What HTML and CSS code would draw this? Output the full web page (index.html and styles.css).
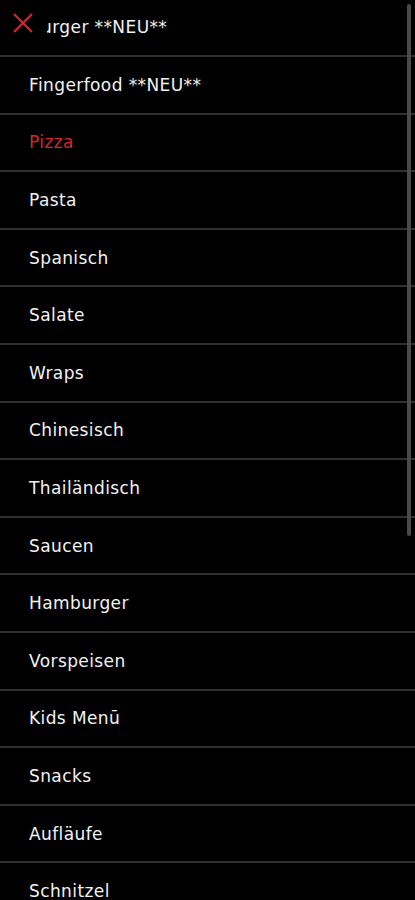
FILE: index.html
```html
<!DOCTYPE html>
<html lang="de">
<head>
    <meta charset="UTF-8">
    <meta name="viewport" content="width=device-width, initial-scale=1.0">
    <title>Speisekarte</title>
    <link rel="stylesheet" href="styles.css">
</head>
<body>
    <nav class="side-menu">
        <button class="close-button" aria-label="Menü schließen">
            <svg width="22" height="22" viewBox="0 0 22 22">
                <path d="M2 2 L20 20 M20 2 L2 20" stroke="#d3262d" stroke-width="2.2" fill="none"/>
            </svg>
        </button>

        <ul class="menu-list">
            <li class="menu-item"><a href="#">Burger **NEU**</a></li>
            <li class="menu-item"><a href="#">Fingerfood **NEU**</a></li>
            <li class="menu-item active"><a href="#">Pizza</a></li>
            <li class="menu-item"><a href="#">Pasta</a></li>
            <li class="menu-item"><a href="#">Spanisch</a></li>
            <li class="menu-item"><a href="#">Salate</a></li>
            <li class="menu-item"><a href="#">Wraps</a></li>
            <li class="menu-item"><a href="#">Chinesisch</a></li>
            <li class="menu-item"><a href="#">Thailändisch</a></li>
            <li class="menu-item"><a href="#">Saucen</a></li>
            <li class="menu-item"><a href="#">Hamburger</a></li>
            <li class="menu-item"><a href="#">Vorspeisen</a></li>
            <li class="menu-item"><a href="#">Kids Menū</a></li>
            <li class="menu-item"><a href="#">Snacks</a></li>
            <li class="menu-item"><a href="#">Aufläufe</a></li>
            <li class="menu-item"><a href="#">Schnitzel</a></li>
        </ul>

        <div class="scroll-thumb"></div>
    </nav>
</body>
</html>
```

FILE: styles.css
```css
* {
    margin: 0;
    padding: 0;
    box-sizing: border-box;
}
html, body {
    height: 100%;
}
body {
    font-family: "DejaVu Sans", "Open Sans", sans-serif;
    background-color: #000;
    color: #f2f2f2;
    overflow: hidden;
}
.side-menu {
    position: relative;
    width: 415px;
    height: 900px;
    overflow: hidden;
}
.close-button {
    position: absolute;
    top: 0;
    left: 0;
    z-index: 10;
    display: flex;
    align-items: flex-start;
    width: 47px;
    height: 50px;
    background: #000;
    border: none;
    padding: 12px 0 0 12px;
    cursor: pointer;
}
.close-button svg {
    display: block;
}
.menu-list {
    list-style: none;
    margin-top: -0.6px;
}
.menu-item {
    height: 57.6px;
    border-bottom: 2px solid #303030;
    display: flex;
    align-items: center;
    padding-left: 29px;
}
.menu-item a {
    color: #f2f2f2;
    text-decoration: none;
    font-size: 17px;
    letter-spacing: 0.4px;
}
.menu-item.active a {
    color: #d3262d;
}
/* fake scrollbar thumb on the right edge */
.scroll-thumb {
    position: absolute;
    top: 4px;
    right: 4px;
    width: 4px;
    height: 532px;
    background: #4a4a4a;
    border-radius: 2px;
}
```
